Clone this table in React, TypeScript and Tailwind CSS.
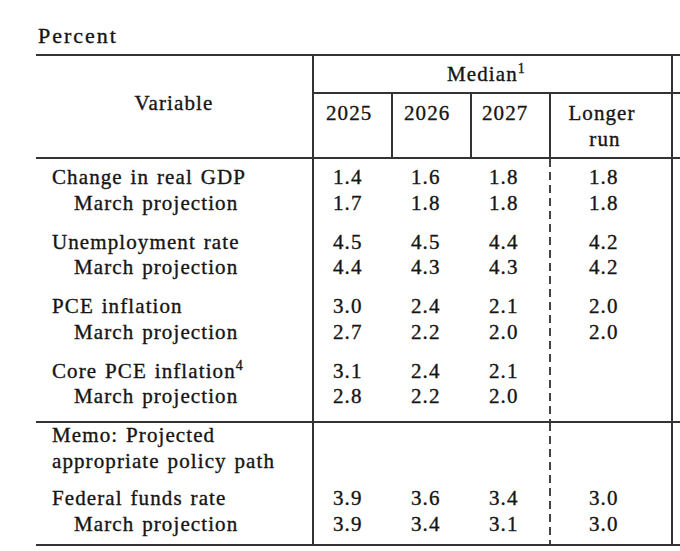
type Group = {
  lines: string[];
  sup?: string;
  indent?: boolean;
  vals: string[][];
};

const BODY: Group[] = [
  { lines: ["Change in real GDP", "March projection"], vals: [["1.4", "1.6", "1.8", "1.8"], ["1.7", "1.8", "1.8", "1.8"]] },
  { lines: ["Unemployment rate", "March projection"], vals: [["4.5", "4.5", "4.4", "4.2"], ["4.4", "4.3", "4.3", "4.2"]] },
  { lines: ["PCE inflation", "March projection"], vals: [["3.0", "2.4", "2.1", "2.0"], ["2.7", "2.2", "2.0", "2.0"]] },
  { lines: ["Core PCE inflation", "March projection"], sup: "4", vals: [["3.1", "2.4", "2.1", ""], ["2.8", "2.2", "2.0", ""]] },
];

const MEMO: Group[] = [
  { lines: ["Memo: Projected", "appropriate policy path"], indent: false, vals: [["", "", "", ""], ["", "", "", ""]] },
  { lines: ["Federal funds rate", "March projection"], vals: [["3.9", "3.6", "3.4", "3.0"], ["3.9", "3.4", "3.1", "3.0"]] },
];

// number columns in the body: width / left rule / text inset
const COLS = [
  "w-[79px] shrink-0 border-l-2 border-[#333] pl-[19px]",
  "w-[79px] shrink-0 pl-[20px]",
  "w-[79px] shrink-0 pl-[19px]",
];

function Line({ children, className = "" }: { children?: React.ReactNode; className?: string }) {
  return <div className={`h-[25.5px] leading-[25.5px] whitespace-nowrap ${className}`}>{children}</div>;
}

function Section({ groups, className, pad, gap }: { groups: Group[]; className: string; pad: string; gap: string }) {
  const numCol = (i: number) =>
    groups.map((g, gi) => (
      <div key={gi}>
        {g.vals.map((row, ri) => (
          <Line key={ri}>{row[i]}</Line>
        ))}
      </div>
    ));

  return (
    <div className={`flex ${className}`}>
      <div className={`flex w-[276px] shrink-0 flex-col ${pad} ${gap}`}>
        {groups.map((g, gi) => (
          <div key={gi}>
            <Line className="pl-[16px]">
              {g.lines[0]}
              {g.sup && <sup className="-top-[8px] text-[14px]">{g.sup}</sup>}
            </Line>
            <Line className={g.indent === false ? "pl-[16px]" : "pl-[38px]"}>{g.lines[1]}</Line>
          </div>
        ))}
      </div>
      {COLS.map((c, i) => (
        <div key={i} className={`flex flex-col ${c} ${pad} ${gap}`}>
          {numCol(i)}
        </div>
      ))}
      <div className="w-[2px] shrink-0 [background-image:repeating-linear-gradient(to_bottom,#444_0px,#444_8px,transparent_8px,transparent_13px)]" />
      <div className={`flex w-[120px] shrink-0 flex-col pl-[38px] ${pad} ${gap}`}>{numCol(3)}</div>
      <div className="flex-1 border-l-2 border-[#333]" />
    </div>
  );
}

export default function App() {
  return (
    <div className="h-[551px] w-[680px] overflow-hidden bg-white font-['Liberation_Serif',serif] text-[21px] tracking-[1.1px] text-[#151515] [-webkit-text-stroke:0.35px_#151515] [word-spacing:1.5px]">
      <div className="h-[54px] pl-[38px] pt-[23px] text-[22px] leading-[26px] tracking-[2px]">Percent</div>

      <div className="ml-[36px] w-[720px] border-t-2 border-[#333]">
        {/* header */}
        <div className="flex h-[103px] border-b-2 border-[#333] leading-[26px]">
          <div className="w-[276px] shrink-0 pt-[34px] text-center">Variable</div>
          <div className="flex w-[359px] shrink-0 flex-col border-l-2 border-[#333]">
            <div className="flex h-[38px] items-center justify-center border-b-2 border-[#333] pr-[12px]">
              <span>
                Median<sup className="-top-[8px] text-[14px]">1</sup>
              </span>
            </div>
            <div className="flex flex-1">
              <div className="w-[77px] shrink-0 pl-[12px] pt-[6px]">2025</div>
              <div className="w-[79px] shrink-0 border-l-2 border-[#333] pl-[11px] pt-[6px]">2026</div>
              <div className="w-[79px] shrink-0 border-l-2 border-[#333] pl-[10px] pt-[6px]">2027</div>
              <div className="w-[122px] shrink-0 border-l-2 border-[#333] pr-[18px] pt-[6px] text-center">
                <div>Longer</div>
                <div className="pl-[6px]">run</div>
              </div>
            </div>
          </div>
          <div className="flex flex-1 flex-col border-l-2 border-[#333]">
            <div className="h-[38px] border-b-2 border-[#333]" />
          </div>
        </div>

        <Section groups={BODY} className="h-[264px] border-b-2 border-[#333]" pad="pt-[6px]" gap="gap-[13.5px]" />
        <Section groups={MEMO} className="h-[123px] border-b-2 border-[#333]" pad="pt-0" gap="gap-[12px]" />
      </div>
    </div>
  );
}
